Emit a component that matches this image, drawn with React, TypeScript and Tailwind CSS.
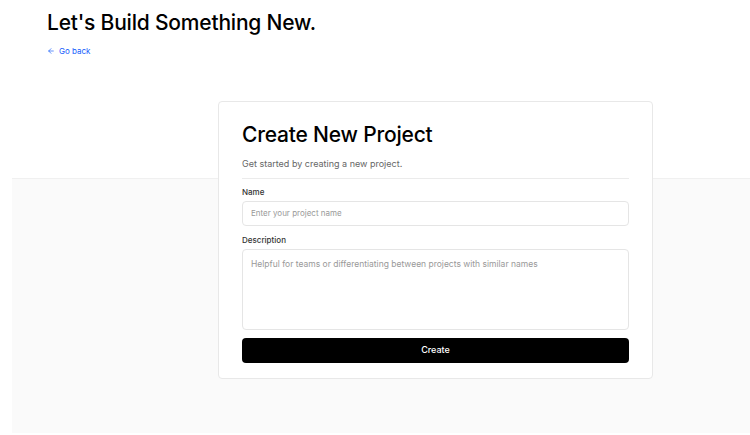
import { ArrowLeft } from 'lucide-react';

export default function App() {
  return (
    <div className="w-[750px] h-[435px] bg-white overflow-hidden font-['Inter',sans-serif] text-black">
      <div className="px-[47px] pt-[9px] h-[178px]">
        <h1 className="text-[21px] leading-[28px] font-medium tracking-[-0.2px]">Let's Build Something New.</h1>
        <a href="#" className="mt-[5px] inline-flex items-center gap-[4px] text-[8px] text-blue-600">
          <ArrowLeft size={8} strokeWidth={2} />
          Go back
        </a>
      </div>
      <div className="ml-[12px] h-[255px] bg-[#fafafa] border-t border-[#f0f0f0]">
        <div className="-mt-[78px] ml-[206px] w-[435px] bg-white border border-[#e8e8e8] rounded-[4px] px-[23px] pt-[18px] pb-[15px]">
          <h2 className="text-[21px] leading-[30px] font-medium tracking-[-0.2px]">Create New Project</h2>
          <p className="mt-[7px] text-[9px] leading-[14px] text-[#666]">Get started by creating a new project.</p>
          <div className="mt-[7px] border-t border-[#ebebeb]" />
          <label className="block mt-[7px] text-[8px] leading-[12px] font-medium text-[#333]">Name</label>
          <input
            className="mt-[2px] w-full h-[25px] border border-[#e5e5e5] rounded-[4px] px-[8px] text-[8px] placeholder:text-[#999] outline-none"
            placeholder="Enter your project name"
          />
          <label className="block mt-[8px] text-[8px] leading-[12px] font-medium text-[#333]">Description</label>
          <textarea
            className="mt-[3px] block w-full h-[81px] border border-[#e5e5e5] rounded-[4px] px-[8px] py-[8px] text-[8.5px] leading-[12px] placeholder:text-[#999] resize-none outline-none"
            placeholder="Helpful for teams or differentiating between projects with similar names"
          />
          <button className="mt-[8px] w-full h-[25px] bg-black text-white rounded-[4px] text-[9px] font-medium">
            Create
          </button>
        </div>
      </div>
    </div>
  );
}
